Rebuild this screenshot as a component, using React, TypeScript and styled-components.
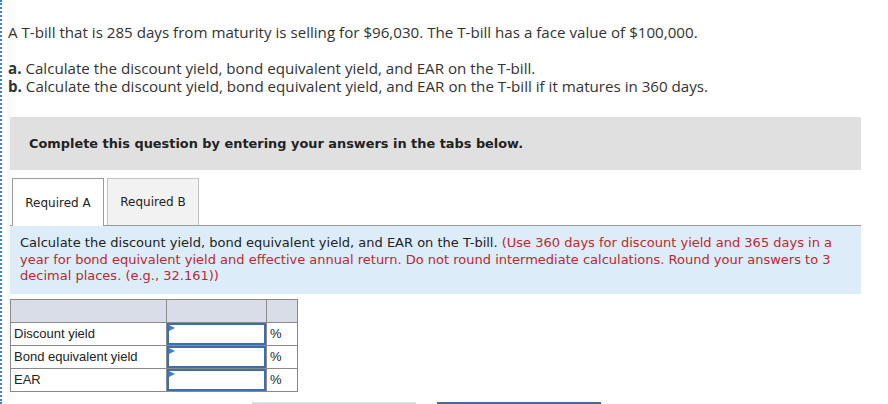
import React from "react";
import styled, { createGlobalStyle } from "styled-components";

const Global = createGlobalStyle`
  html, body { margin: 0; padding: 0; background: #fff; }
  body { width: 888px; height: 404px; overflow: hidden; }
`;

const Page = styled.div`
  position: relative;
  height: 404px;
  box-sizing: border-box;
  border-left: 2px dotted #3d7fd0;
  padding: 22px 27px 0 6px;
  overflow: hidden;
`;

const Intro = styled.p`
  margin: 0;
  font-family: "Open Sans", "Liberation Sans", sans-serif;
  font-size: 15.15px;
  color: #333;
  line-height: 20px;
`;

const Parts = styled.div`
  margin-top: 17px;
  font-family: "Open Sans", "Liberation Sans", sans-serif;
  font-size: 15.15px;
  color: #333;
  line-height: 18px;
`;

const Bold = styled.b`
  font-weight: 700;
`;

const Instruction = styled.div`
  margin: 22px 0 0 2px;
  height: 53px;
  background: #e0e0e0;
  display: flex;
  align-items: center;
  padding-left: 19px;
  font-family: "DejaVu Sans", Verdana, sans-serif;
  font-weight: 700;
  font-size: 12.9px;
  color: #222;
`;

const Tabs = styled.div`
  margin: 8px 0 0 2px;
  display: flex;
  align-items: flex-end;
  border-bottom: 1px solid #9a9a9a;
  padding-left: 2px;
  gap: 3px;
`;

const Tab = styled.div<{ $active?: boolean }>`
  width: 92px;
  box-sizing: border-box;
  display: flex;
  align-items: center;
  justify-content: center;
  font-family: "DejaVu Sans", Verdana, sans-serif;
  font-size: 12px;
  color: #222;
  border: 1px solid ${(p) => (p.$active ? "#9a9a9a" : "#c4c4c4")};
  border-bottom: none;
  background: ${(p) => (p.$active ? "#fff" : "#f2f2f2")};
  margin-bottom: ${(p) => (p.$active ? "-1px" : "0")};
  height: ${(p) => (p.$active ? "48px" : "47px")};
`;

const Info = styled.div`
  margin-left: 2px;
  background: #dcecf9;
  padding: 9px 10px 9px 10px;
  font-family: "DejaVu Sans", Verdana, sans-serif;
  font-size: 13px;
  line-height: 16.5px;
  color: #222;
`;

const Red = styled.span`
  color: #c1272d;
`;

const Table = styled.table`
  margin: 5px 0 0 2px;
  border-collapse: collapse;
  font-family: "Liberation Sans", Arial, sans-serif;
  font-size: 13px;
  color: #222;
`;

const HeadCell = styled.td<{ $w: number }>`
  width: ${(p) => p.$w}px;
  height: 22px;
  padding: 0;
  background: #d9dde8;
  border: 1px solid #8a8a8a;
`;

const LabelCell = styled.td`
  height: 22px;
  padding: 0 3px;
  border: 1px solid #8a8a8a;
  white-space: nowrap;
`;

const InputCell = styled.td`
  padding: 0;
  height: 22px;
  border: 1px solid #8a8a8a;
`;

const InputBox = styled.div`
  position: relative;
  height: 22px;
  box-sizing: border-box;
  border: 2px solid #3d6fae;
  background: #fff;
  &::before {
    content: "";
    position: absolute;
    left: 0;
    top: 0;
    border-left: 6px solid #3d7fd0;
    border-top: 3px solid transparent;
    border-bottom: 3px solid transparent;
  }
`;

const PctCell = styled.td`
  padding: 0 3px;
  height: 22px;
  border: 1px solid #8a8a8a;
`;

const ButtonRow = styled.div`
  position: absolute;
  left: 250px;
  top: 402px;
  display: flex;
  gap: 21px;
`;

const Btn = styled.div<{ $primary?: boolean }>`
  width: 164px;
  height: 20px;
  border-top: 2px solid ${(p) => (p.$primary ? "#3f6d9f" : "#d7e0e8")};
  background: ${(p) => (p.$primary ? "#3f6d9f" : "#f6f8fa")};
`;

const rows = ["Discount yield", "Bond equivalent yield", "EAR"];

export default function App() {
  return (
    <>
      <Global />
      <Page>
        <Intro>
          A T-bill that is 285 days from maturity is selling for $96,030. The T-bill has a face value of $100,000.
        </Intro>
        <Parts>
          <div>
            <Bold>a.</Bold> Calculate the discount yield, bond equivalent yield, and EAR on the T-bill.
          </div>
          <div>
            <Bold>b.</Bold> Calculate the discount yield, bond equivalent yield, and EAR on the T-bill if it matures in 360 days.
          </div>
        </Parts>
        <Instruction>Complete this question by entering your answers in the tabs below.</Instruction>
        <Tabs>
          <Tab $active>Required A</Tab>
          <Tab>Required B</Tab>
        </Tabs>
        <Info>
          Calculate the discount yield, bond equivalent yield, and EAR on the T-bill.{" "}
          <Red>
            (Use 360 days for discount yield and 365 days in a year for bond equivalent yield and effective annual return. Do not round intermediate calculations. Round your answers to 3 decimal places. (e.g., 32.161))
          </Red>
        </Info>
        <Table>
          <tbody>
            <tr>
              <HeadCell $w={155} />
              <HeadCell $w={99} />
              <HeadCell $w={30} />
            </tr>
            {rows.map((r) => (
              <tr key={r}>
                <LabelCell>{r}</LabelCell>
                <InputCell>
                  <InputBox />
                </InputCell>
                <PctCell>%</PctCell>
              </tr>
            ))}
          </tbody>
        </Table>
        <ButtonRow>
          <Btn />
          <Btn $primary />
        </ButtonRow>
      </Page>
    </>
  );
}
